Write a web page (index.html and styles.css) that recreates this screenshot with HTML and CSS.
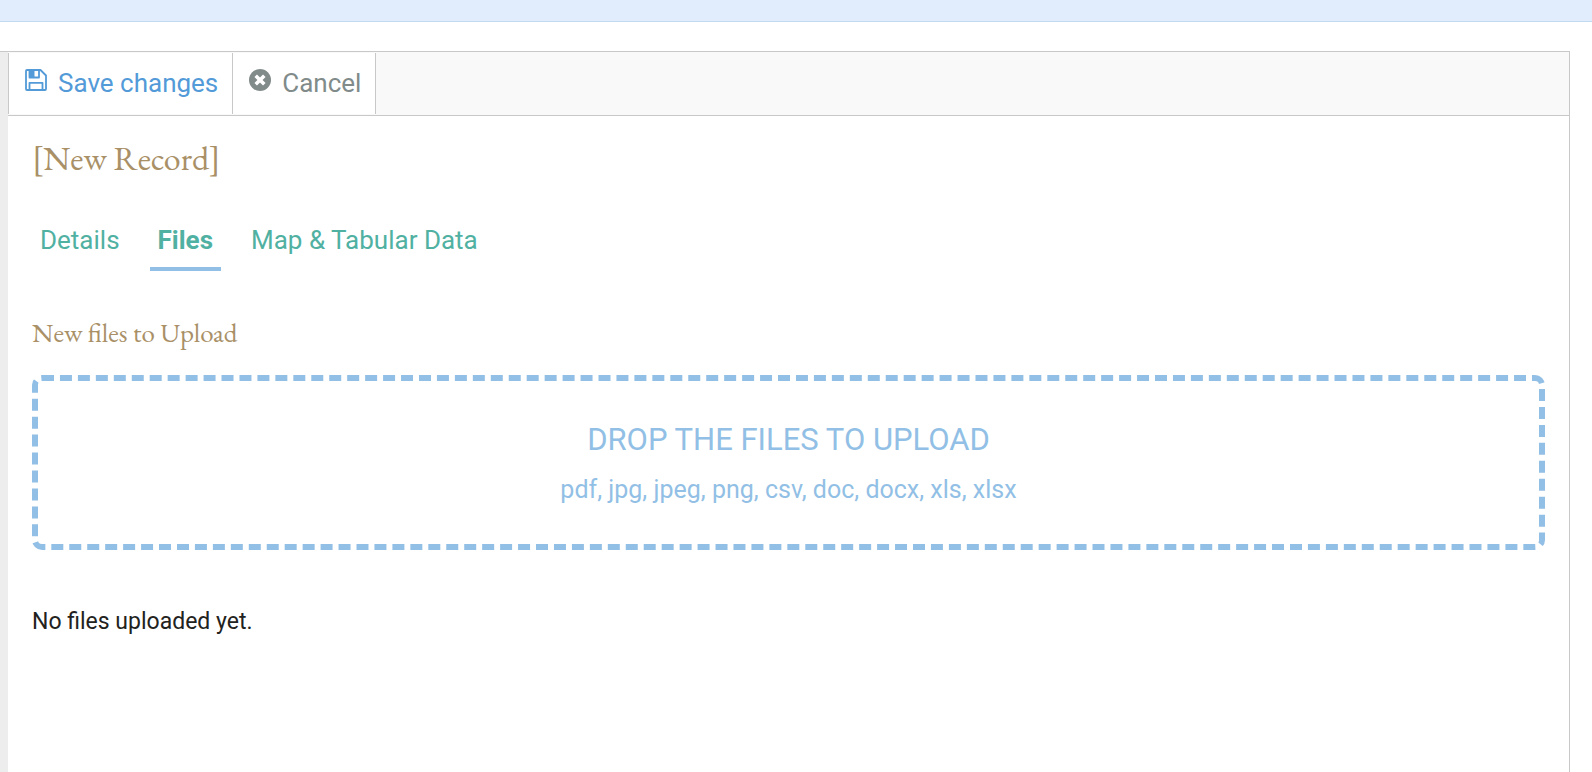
FILE: index.html
```html
<!DOCTYPE html>
<html lang="en">
<head>
<meta charset="utf-8">
<meta name="viewport" content="width=device-width, initial-scale=1">
<title>New Record</title>
<link rel="stylesheet" href="styles.css">
</head>
<body>
<header class="top-band"></header>
<main class="workspace">
  <section class="panel">
    <div class="toolbar">
      <button type="button" class="tool save">
        <svg class="icon" viewBox="0 0 22 22" aria-hidden="true"><path d="M1 2a1 1 0 0 1 1-1h13.500L21 6.500V20a1 1 0 0 1-1 1H2a1 1 0 0 1-1-1zM4.500 1v7.500H14V1M4.500 21v-7.200H17.500V21" fill="none" stroke="currentColor" stroke-width="1.800" stroke-linejoin="round"/><path d="M4.500 1H9.500v7H4.500z" fill="currentColor"/></svg>
        <span>Save changes</span>
      </button>
      <button type="button" class="tool cancel">
        <svg class="icon" viewBox="0 0 22 22" aria-hidden="true"><circle cx="11" cy="11" r="11" fill="currentColor"/><path d="M6.700 6.700l8.600 8.600M15.300 6.700l-8.600 8.600" stroke="#fff" stroke-width="3.600"/></svg>
        <span>Cancel</span>
      </button>
    </div>
    <div class="content">
      <h1 class="title">[New Record]</h1>
      <nav class="tabs">
        <a class="tab" href="#details">Details</a>
        <a class="tab active" href="#files" aria-current="page">Files</a>
        <a class="tab" href="#map">Map &amp; Tabular Data</a>
      </nav>
      <h2 class="subtitle">New files to Upload</h2>
      <div class="dropzone">
        <p class="drop-title">DROP THE FILES TO UPLOAD</p>
        <p class="drop-types">pdf, jpg, jpeg, png, csv, doc, docx, xls, xlsx</p>
      </div>
      <p class="empty">No files uploaded yet.</p>
    </div>
  </section>
</main>
</body>
</html>
```
FILE: styles.css
```css
* { box-sizing: border-box; }
body {
  margin: 0;
  min-height: 100vh;
  display: flex;
  flex-direction: column;
  background: #fff;
  color: #222220;
  font-family: Roboto, "Liberation Sans", sans-serif;
}
h1, h2, p { margin: 0; font-weight: 400; }
.top-band {
  height: 22px;
  background: #e1edfd;
  border-bottom: 1px solid #c3d9f0;
}
.workspace {
  flex: 1;
  display: flex;
  margin: 29px 22px 0 0;
  padding-left: 8px;
  background: #ededed;
  border-top: 1px solid #c8c8c8;
}
.panel {
  flex: 1;
  background: #fff;
  border-right: 1px solid #c8c8c8;
}
.toolbar {
  display: flex;
  height: 64px;
  padding: 1px 0;
  background: #f9f9f9;
  border-bottom: 1px solid #c8c8c8;
}
.tool {
  display: flex;
  align-items: center;
  gap: 11px;
  padding: 0 14px 2px 16px;
  border: 0;
  border-left: 1px solid #c8c8c8;
  background: #fff;
  font: 400 26px/32px Roboto, "Liberation Sans", sans-serif;
  cursor: pointer;
}
.tool:last-child { border-right: 1px solid #c8c8c8; }
.save { color: #539ad8; }
.cancel { color: #808b8a; }
.icon { width: 22px; height: 22px; margin-bottom: 6px; }
.content { padding: 22px 24px; }
.title {
  color: #a99067;
  font: 400 34px/40px "EB Garamond", "Liberation Serif", serif;
}
.tabs {
  display: flex;
  gap: 22px;
  margin-top: 40px;
}
.tab {
  padding: 6px 8px 11px;
  border-bottom: 4px solid transparent;
  color: #50b1a2;
  font-size: 26px;
  line-height: 32px;
  text-decoration: none;
}
.active { border-color: #92bfe5; font-weight: 700; }
.subtitle {
  margin: 46px 0 26px;
  color: #a99067;
  font: 400 27px/32px "EB Garamond", "Liberation Serif", serif;
}
.dropzone {
  padding: 39px 24px 38px;
  border: 6px dashed #92bfe5;
  border-radius: 10px;
  color: #92bfe5;
  text-align: center;
}
.drop-title { font-size: 31px; line-height: 40px; }
.drop-types { margin-top: 14px; font-size: 25px; line-height: 32px; }
.empty { margin-top: 56px; font-size: 23px; line-height: 32px; }
```
